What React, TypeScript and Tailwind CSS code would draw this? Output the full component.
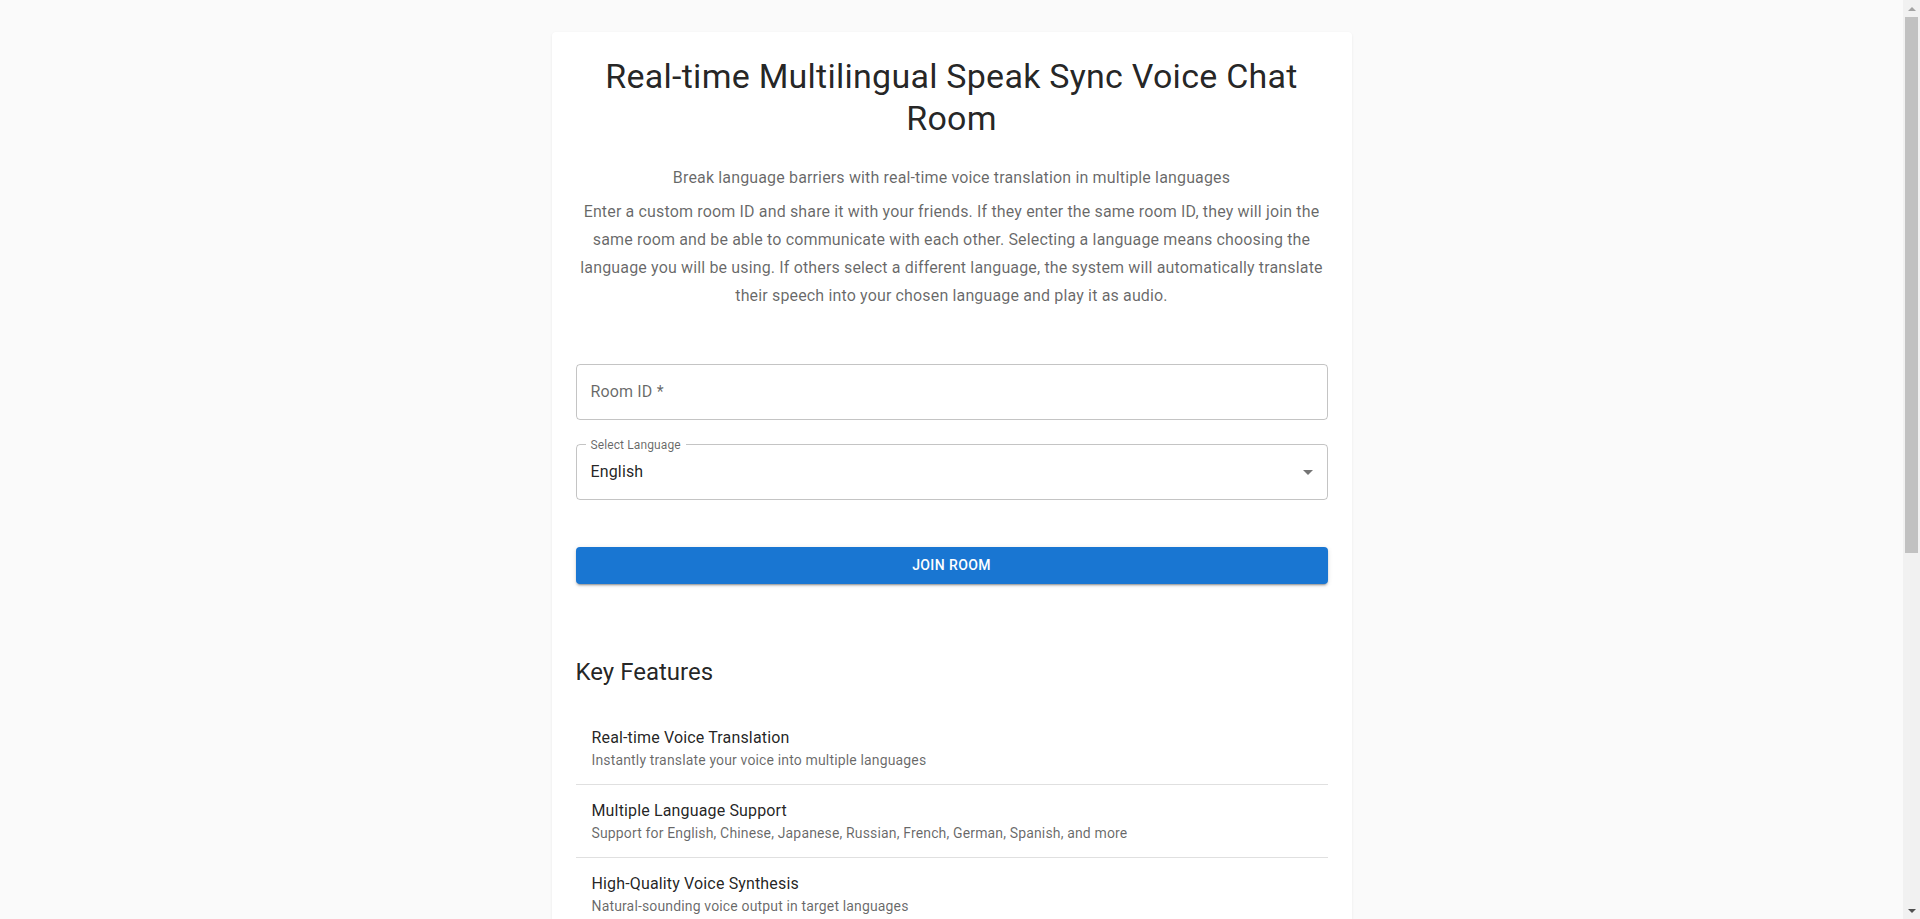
import { useState } from "react";

const features = [
  { title: "Real-time Voice Translation", desc: "Instantly translate your voice into multiple languages" },
  { title: "Multiple Language Support", desc: "Support for English, Chinese, Japanese, Russian, French, German, Spanish, and more" },
  { title: "High-Quality Voice Synthesis", desc: "Natural-sounding voice output in target languages" },
  { title: "Custom Chat Rooms", desc: "Create a room with any ID and invite your friends to join" },
  { title: "Low Latency", desc: "Fast speech recognition and translation for smooth conversations" },
  { title: "No Registration Required", desc: "Just enter a room ID, pick your language and start talking" },
];

const steps = [
  "Enter a room ID that you want to create or join",
  "Select the language you will speak",
  "Click Join Room and allow microphone access",
  "Start speaking, others will hear you in their own language",
];

function Scrollbar() {
  return (
    <div className="flex h-screen w-[17px] shrink-0 flex-col bg-[#f1f1f1]">
      <div className="flex h-[17px] items-center justify-center">
        <svg viewBox="0 0 8 4" className="h-1 w-2 fill-[#a3a3a3]">
          <path d="M0 4L4 0l4 4z" />
        </svg>
      </div>
      <div className="mx-[2px] h-[536px] bg-[#c1c1c1]" />
      <div className="flex-1" />
      <div className="flex h-[17px] items-center justify-center">
        <svg viewBox="0 0 8 4" className="h-1 w-2 fill-[#505050]">
          <path d="M0 0h8L4 4z" />
        </svg>
      </div>
    </div>
  );
}

export default function App() {
  const [roomId, setRoomId] = useState("");
  const [language] = useState("English");

  return (
    <div className="flex h-screen bg-[#fafafa] font-['Roboto',sans-serif] text-black/[0.87]">
      <div className="h-screen flex-1 overflow-hidden py-8">
        <div className="mx-auto w-[800px] rounded bg-white p-6 shadow-[0_1px_3px_rgba(0,0,0,0.07)]">
          <h1 className="mb-[26px] text-center text-[34px] font-normal leading-[1.235] tracking-[0.00735em] text-black/[0.87]">
            Real-time Multilingual Speak Sync Voice Chat Room
          </h1>
          <p className="mb-2 text-center text-base leading-6 tracking-[0.00938em] text-black/60">
            Break language barriers with real-time voice translation in multiple languages
          </p>
          <p className="text-center text-base leading-7 tracking-[0.00938em] text-black/60">
            Enter a custom room ID and share it with your friends. If they enter the same room ID, they will join the
            same room and be able to communicate with each other. Selecting a language means choosing the language you
            will be using. If others select a different language, the system will automatically translate their speech
            into your chosen language and play it as audio.
          </p>

          <div className="mt-[54px] flex h-14 items-center rounded border border-black/[0.23] px-[14px]">
            <input
              value={roomId}
              onChange={(e) => setRoomId(e.target.value)}
              placeholder="Room ID *"
              className="w-full bg-transparent text-base tracking-[0.00938em] text-black/[0.87] outline-none placeholder:text-black/60"
            />
          </div>

          <div className="relative mt-6 flex h-14 items-center justify-between rounded border border-black/[0.23] pl-[14px] pr-[7px]">
            <span className="absolute left-[9px] top-0 -translate-y-1/2 bg-white px-[5px] text-[12px] leading-[17px] tracking-[0.00938em] text-black/60">
              Select Language
            </span>
            <span className="text-base tracking-[0.00938em] text-black/[0.87]">{language}</span>
            <svg viewBox="0 0 24 24" className="h-6 w-6 fill-black/[0.54]">
              <path d="M7 10l5 5 5-5z" />
            </svg>
          </div>

          <button className="mt-[47px] h-[37px] w-full rounded bg-[#1976d2] text-sm font-medium uppercase tracking-[0.02857em] text-white shadow-[0_3px_1px_-2px_rgba(0,0,0,0.2),0_2px_2px_0_rgba(0,0,0,0.14),0_1px_5px_0_rgba(0,0,0,0.12)]">
            Join Room
          </button>

          <h2 className="mb-4 mt-[72px] text-2xl font-normal leading-[1.334] text-black/[0.87]">Key Features</h2>
          <ul className="py-2">
            {features.map((f) => (
              <li key={f.title} className="border-b border-black/[0.12] px-4 py-2">
                <div className="my-[6px]">
                  <div className="text-base leading-6 tracking-[0.00938em] text-black/[0.87]">{f.title}</div>
                  <div className="text-sm leading-5 tracking-[0.01071em] text-black/60">{f.desc}</div>
                </div>
              </li>
            ))}
          </ul>

          <h2 className="mb-4 mt-6 text-2xl font-normal leading-[1.334] text-black/[0.87]">How to Use</h2>
          <ol className="py-2">
            {steps.map((s, i) => (
              <li key={s} className="px-4 py-2">
                <div className="my-1 text-base leading-6 tracking-[0.00938em] text-black/[0.87]">
                  {i + 1}. {s}
                </div>
              </li>
            ))}
          </ol>
        </div>
      </div>
      <Scrollbar />
    </div>
  );
}
